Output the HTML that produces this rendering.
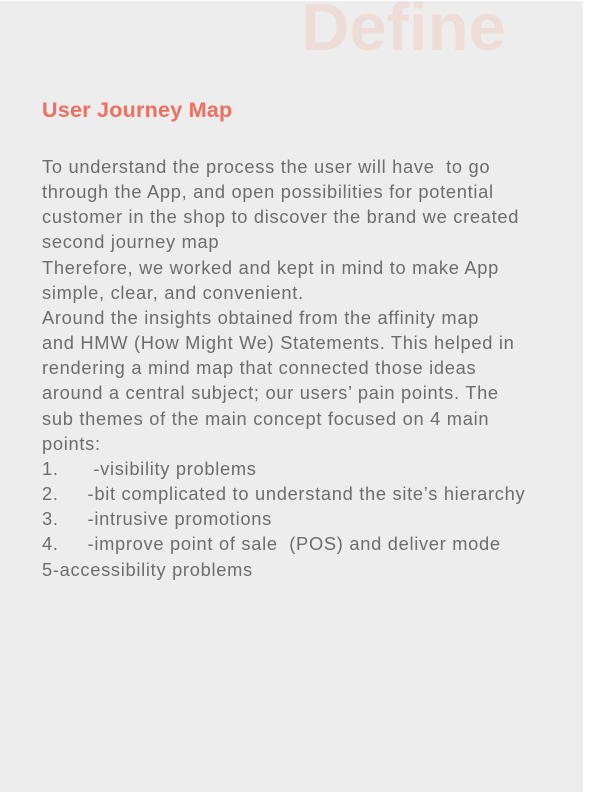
<!DOCTYPE html>
<html><head><meta charset="utf-8"><style>
html,body{margin:0;padding:0;background:#fff;}
body{width:612px;height:792px;position:relative;overflow:hidden;font-family:"Liberation Sans",sans-serif;}
.bg{position:absolute;left:0;top:1px;width:583px;height:791px;background:#ededed;}
.def{position:absolute;left:301px;top:-11px;font-size:67px;font-weight:bold;color:#eedcd7;letter-spacing:0px;}
.h{position:absolute;left:42px;top:98px;font-size:21.5px;font-weight:bold;color:#ef6f5e;letter-spacing:0.25px;}
.t{position:absolute;left:42px;top:154px;font-size:18.3px;line-height:25.15px;color:#6d6d6d;white-space:pre;letter-spacing:0.7px;}
</style></head><body>
<div class="bg"></div>
<div class="def">Define</div>
<div class="h">User Journey Map</div>
<div class="t">To understand the process the user will have  to go
through the App, and open possibilities for potential
customer in the shop to discover the brand we created
second journey map
Therefore, we worked and kept in mind to make App
simple, clear, and convenient.
Around the insights obtained from the affinity map
and HMW (How Might We) Statements. This helped in
rendering a mind map that connected those ideas
around a central subject; our users’ pain points. The
sub themes of the main concept focused on 4 main
points:
1.      -visibility problems
2.     -bit complicated to understand the site’s hierarchy
3.     -intrusive promotions
4.     -improve point of sale  (POS) and deliver mode
5-accessibility problems</div>
</body></html>
